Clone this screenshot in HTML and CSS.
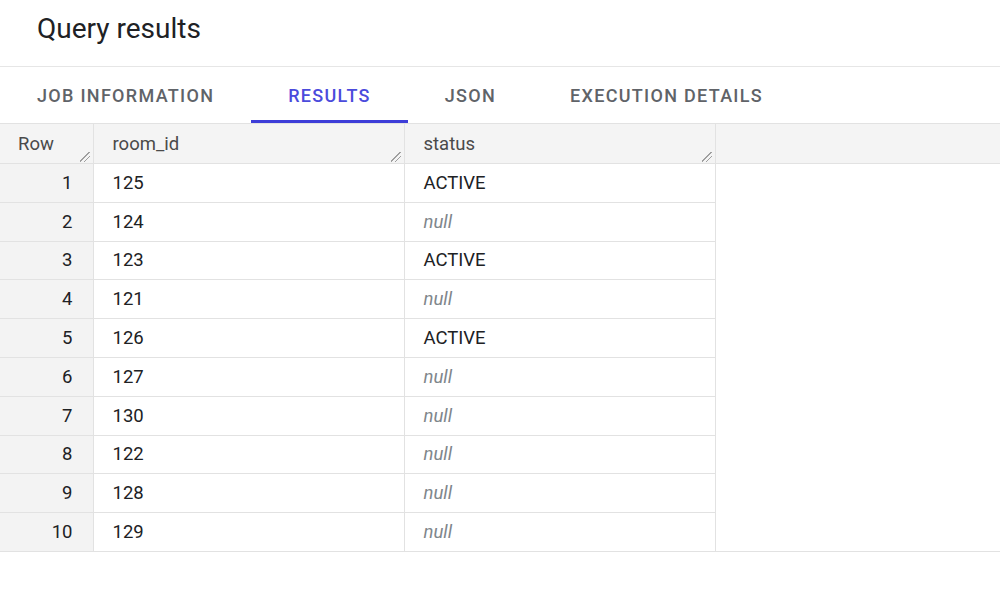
FILE: index.html
```html
<!DOCTYPE html>
<html lang="en">
<head>
  <meta charset="UTF-8" />
  <meta name="viewport" content="width=device-width, initial-scale=1.0" />
  <title>Query results</title>
  <link rel="stylesheet" href="styles.css">
</head>
<body>
  <h1 class="page-title">Query results</h1>

  <!-- Tabs -->
  <div class="tabs">
    <div class="tab">Job information</div>
    <div class="tab active">Results</div>
    <div class="tab">JSON</div>
    <div class="tab">Execution details</div>
  </div>

  <table class="results-table">
    <colgroup>
      <col class="col-row">
      <col class="col-wide">
      <col class="col-wide">
      <col>
    </colgroup>
    <thead>
      <tr>
        <th class="row-head">Row<span class="grip"></span></th>
        <th>room_id<span class="grip"></span></th>
        <th>status<span class="grip"></span></th>
        <th class="filler"></th>
      </tr>
    </thead>
    <tbody>
      <tr><td class="row-num">1</td><td>125</td><td>ACTIVE</td><td class="filler"></td></tr>
      <tr><td class="row-num">2</td><td>124</td><td class="null">null</td><td class="filler"></td></tr>
      <tr><td class="row-num">3</td><td>123</td><td>ACTIVE</td><td class="filler"></td></tr>
      <tr><td class="row-num">4</td><td>121</td><td class="null">null</td><td class="filler"></td></tr>
      <tr><td class="row-num">5</td><td>126</td><td>ACTIVE</td><td class="filler"></td></tr>
      <tr><td class="row-num">6</td><td>127</td><td class="null">null</td><td class="filler"></td></tr>
      <tr><td class="row-num">7</td><td>130</td><td class="null">null</td><td class="filler"></td></tr>
      <tr><td class="row-num">8</td><td>122</td><td class="null">null</td><td class="filler"></td></tr>
      <tr><td class="row-num">9</td><td>128</td><td class="null">null</td><td class="filler"></td></tr>
      <tr class="last"><td class="row-num">10</td><td>129</td><td class="null">null</td><td class="filler"></td></tr>
    </tbody>
  </table>
</body>
</html>
```

FILE: styles.css
```css
body {
  font-family: Roboto, "Liberation Sans", sans-serif;
  background-color: #fff;
  color: #202124;
  margin: 0;
  padding: 0;
}
.page-title {
  font-size: 28px;
  font-weight: 400;
  line-height: 32px;
  margin: 0;
  padding: 13px 37px 21px;
  color: #202124;
}
.tabs {
  display: flex;
  height: 57px;
  border-top: 1px solid #e6e6e6;
  box-sizing: border-box;
}
.tab {
  padding: 0 37px;
  font-size: 18px;
  font-weight: 500;
  text-transform: uppercase;
  color: #606368;
  display: flex;
  align-items: center;
  border-bottom: 3px solid transparent;
  padding-top: 4px;
  letter-spacing: 1.3px;
}
.tab.active {
  color: #4b4bdc;
  border-bottom-color: #3d3dd8;
}
.results-table {
  width: 100%;
  border-collapse: collapse;
  table-layout: fixed;
  font-size: 18.5px;
}
.col-row {
  width: 93px;
}
.col-wide {
  width: 311px;
}
.results-table th {
  position: relative;
  height: 39px;
  background-color: #f4f4f4;
  font-weight: 400;
  color: #4a4a4a;
  text-align: left;
  padding: 0 19px;
  border: 1px solid #e2e2e2;
  border-left: none;
}
.results-table th.row-head {
  padding-left: 18px;
}
.results-table th.filler {
  border-right: none;
}
.results-table td {
  height: 38.8px;
  box-sizing: border-box;
  padding: 0 19px;
  border-right: 1px solid #e2e2e2;
  border-bottom: 1px solid #e2e2e2;
}
.results-table td.row-num {
  background-color: #f3f3f3;
  text-align: right;
  padding-right: 20px;
}
.results-table td.null {
  font-style: italic;
  color: #80868b;
}
.results-table td.filler {
  border: none;
}
.results-table tr.last td.filler {
  border-bottom: 1px solid #e2e2e2;
}
.grip {
  position: absolute;
  right: 3px;
  bottom: 1px;
  width: 10px;
  height: 10px;
  background:
    linear-gradient(135deg, transparent 45%, #8a8a8a 45%, #8a8a8a 55%, transparent 55%) no-repeat 0 0 / 10px 10px,
    linear-gradient(135deg, transparent 45%, #8a8a8a 45%, #8a8a8a 55%, transparent 55%) no-repeat 4px 4px / 6px 6px;
  opacity: 0.8;
}
```
